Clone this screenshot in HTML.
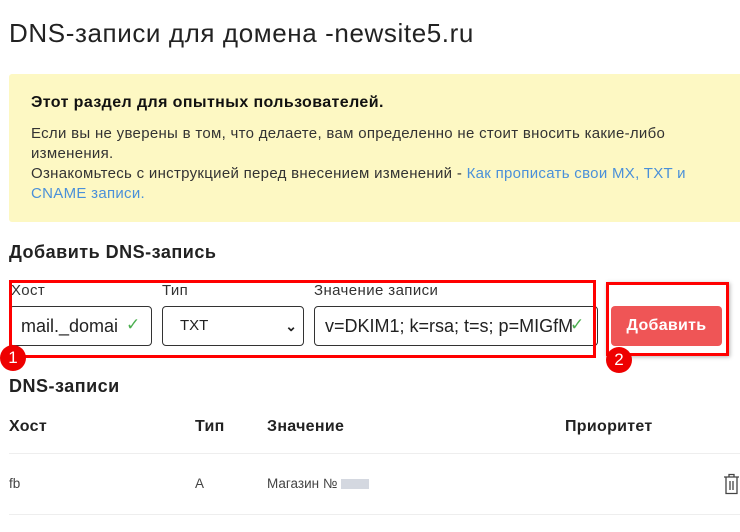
<!DOCTYPE html>
<html><head><meta charset="utf-8"><style>
*{box-sizing:border-box;margin:0;padding:0}
body{width:740px;height:532px;overflow:hidden;background:#fff;font-family:"Liberation Sans",sans-serif;color:#222;position:relative}
.a{position:absolute;white-space:nowrap}
.inp{position:absolute;border:1px solid #333;border-radius:4px;height:40px;top:306px;background:#fff;font-size:18px;line-height:38px;padding-left:6px;overflow:hidden;color:#222}
.red{position:absolute;border:3px solid #f00}
.badge{position:absolute;width:26px;height:26px;border-radius:50%;background:#e00;color:#fff;font-size:17px;text-align:center;line-height:26px}
.chk{position:absolute;color:#4caf50;font-size:17px}
.lbl{font-size:15px;color:#333;letter-spacing:0.4px}
.th{font-size:16px;font-weight:bold;letter-spacing:0.3px}
</style></head><body>
<div class="a" style="left:9px;top:18px;font-size:26px;color:#222;letter-spacing:0.6px">DNS-записи для домена -newsite5.ru</div>
<div class="a" style="left:9px;top:74px;width:740px;height:148px;background:#fdf8c3;border-radius:3px"></div>
<div class="a" style="left:31px;top:94px;font-size:16px;font-weight:bold;color:#111;letter-spacing:0.4px">Этот раздел для опытных пользователей.</div>
<div class="a" style="left:31px;top:124px;font-size:15px;line-height:20px;color:#333;letter-spacing:0.3px">Если вы не уверены в том, что делаете, вам определенно не стоит вносить какие-либо<br>изменения.<br>Ознакомьтесь с инструкцией перед внесением изменений - <span style="color:#4a90d9">Как прописать свои MX, TXT и</span><br><span style="color:#4a90d9">CNAME записи.</span></div>
<div class="a" style="left:9px;top:242px;font-size:18px;font-weight:bold;color:#222;letter-spacing:0.5px">Добавить DNS-запись</div>
<div class="a lbl" style="left:11px;top:282px">Хост</div>
<div class="a lbl" style="left:162px;top:282px">Тип</div>
<div class="a lbl" style="left:314px;top:282px">Значение записи</div>
<div class="inp" style="left:9px;width:143px;padding-left:11px">mail._domai</div>
<div class="chk" style="left:126px;top:315px">✓</div>
<div class="inp" style="left:162px;width:142px;padding-left:17px;font-size:15px">TXT<span style="position:absolute;right:6px;top:0;font-size:14px;font-weight:bold">&#8964;</span></div>
<div class="inp" style="left:314px;width:284px;padding-left:10px">v=DKIM1; k=rsa; t=s; p=MIGfM</div>
<div class="chk" style="left:570px;top:315px">✓</div>
<div class="red" style="left:9px;top:280px;width:587px;height:78px"></div>
<div class="badge" style="left:0;top:345px">1</div>
<div class="a" style="left:611px;top:306px;width:111px;height:40px;background:#ef5556;border-radius:4px;color:#fff;font-weight:bold;font-size:16px;text-align:center;line-height:40px;letter-spacing:0.3px">Добавить</div>
<div class="red" style="left:606px;top:282px;width:123px;height:74px;box-shadow:1px 1px 4px rgba(0,0,0,.3)"></div>
<div class="badge" style="left:606px;top:347px">2</div>
<div class="a" style="left:9px;top:376px;font-size:18px;font-weight:bold;color:#222;letter-spacing:0.5px">DNS-записи</div>
<div class="a th" style="left:9px;top:418px">Хост</div>
<div class="a th" style="left:195px;top:418px">Тип</div>
<div class="a th" style="left:267px;top:418px">Значение</div>
<div class="a th" style="left:565px;top:418px">Приоритет</div>
<div class="a" style="left:9px;top:453px;width:731px;height:1px;background:#eee"></div>
<div class="a" style="left:9px;top:476px;font-size:13.5px;color:#444">fb</div>
<div class="a" style="left:195px;top:476px;font-size:13.5px;color:#444">A</div>
<div class="a" style="left:267px;top:476px;font-size:13.5px;color:#444">Магазин № <span style="display:inline-block;width:28px;height:10px;background:#d4d8e0;vertical-align:-1px"></span></div>
<svg class="a" style="left:723px;top:473px" width="17" height="22" viewBox="0 0 17 22" fill="none" stroke="#444" stroke-width="1.3"><path d="M1 4h15M6 4V1.5h5V4M3 4v16.5h11V4M7 8v9M10 8v9"/></svg>
<div class="a" style="left:9px;top:514px;width:731px;height:1px;background:#eee"></div>
</body></html>
